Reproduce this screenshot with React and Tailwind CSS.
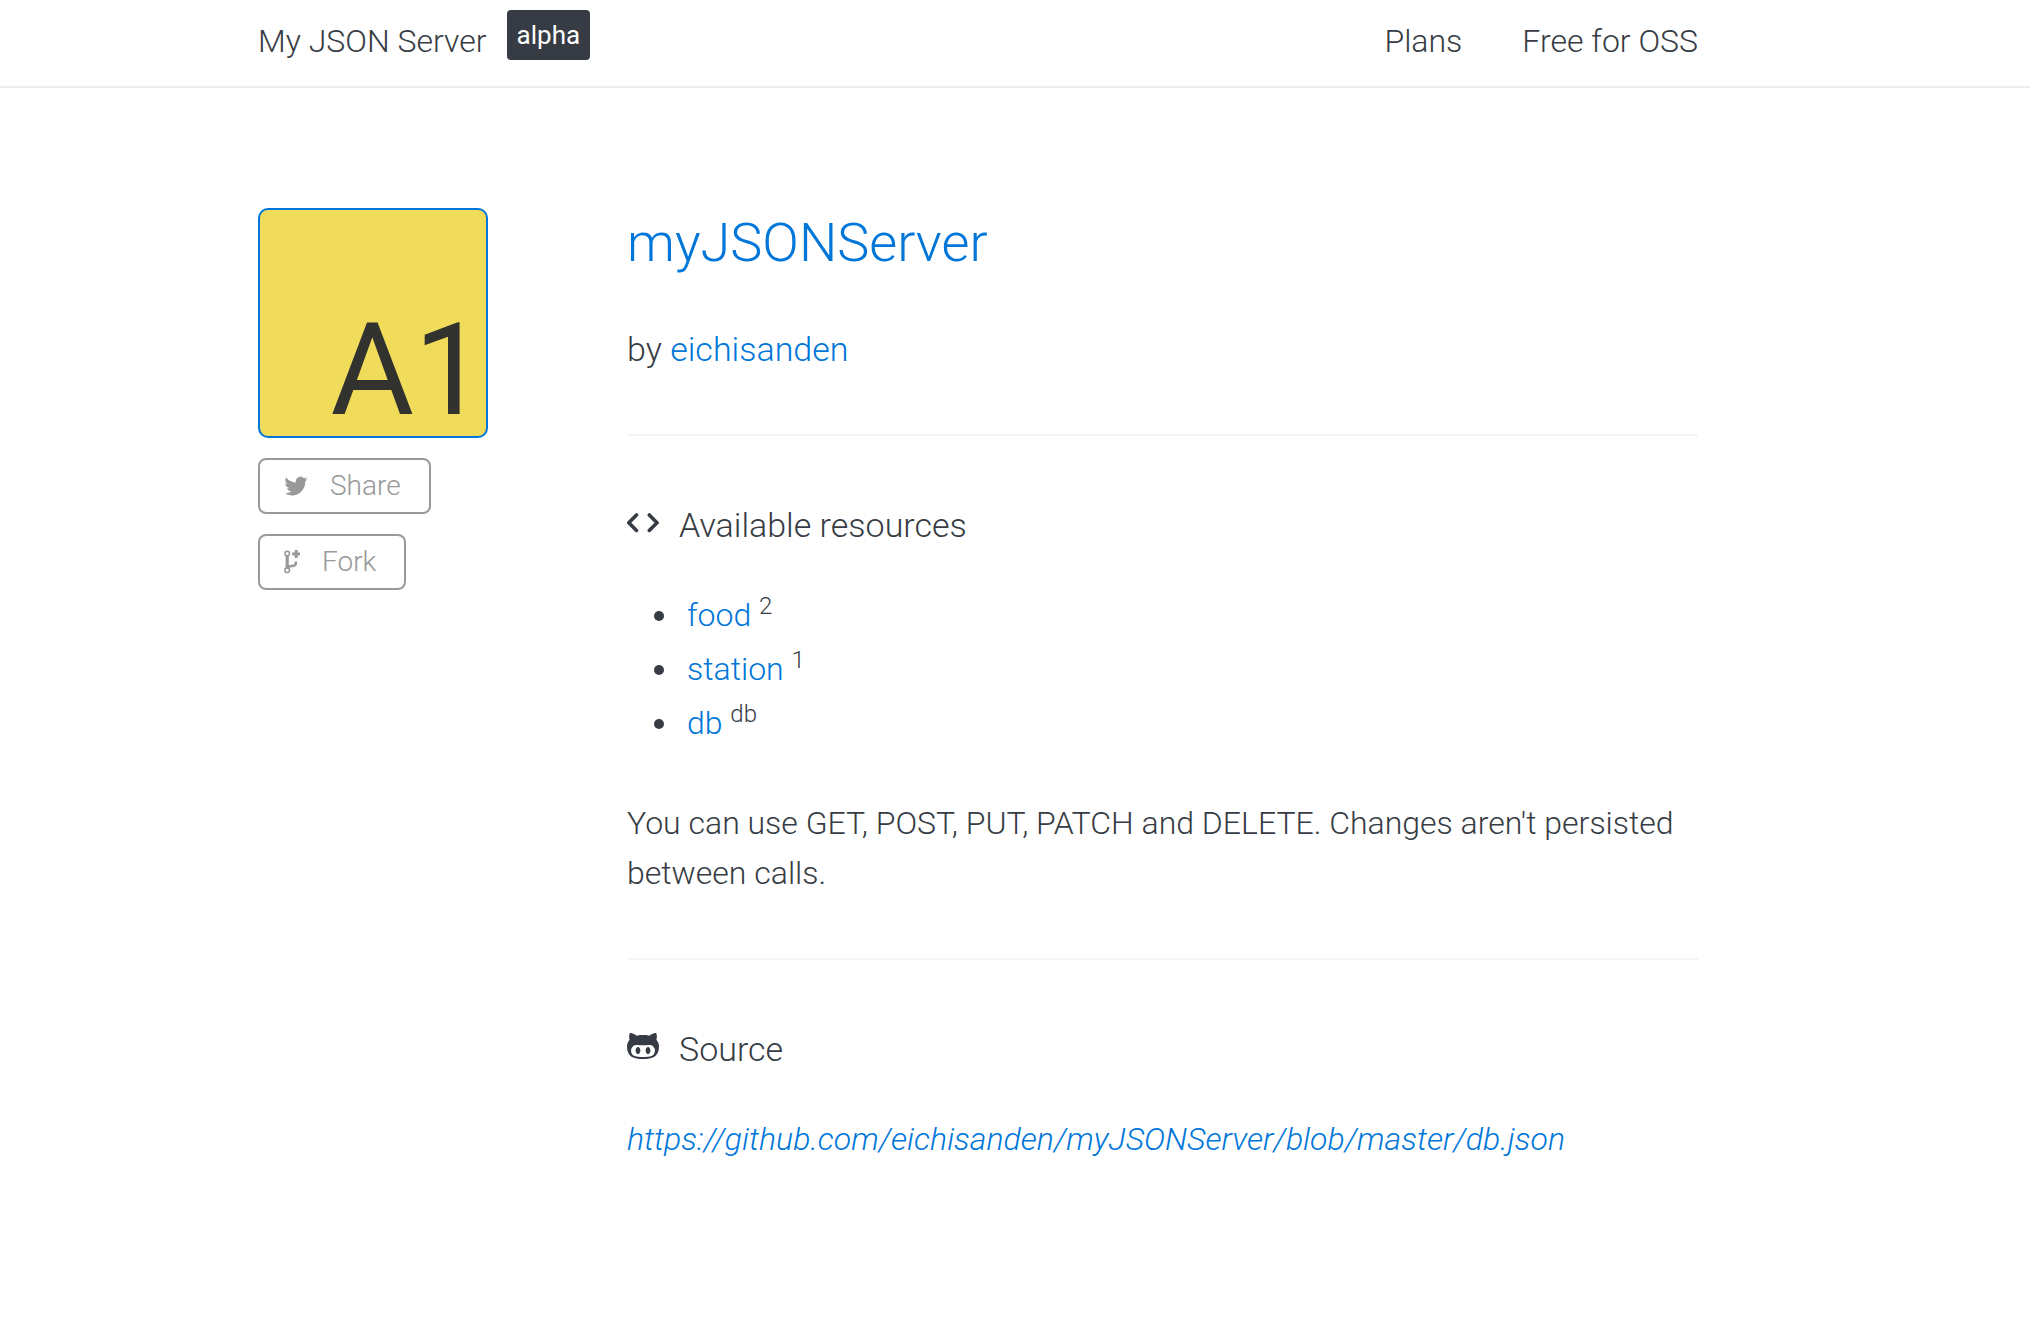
const resources = [
  { name: "food", count: "2" },
  { name: "station", count: "1" },
  { name: "db", count: "db" },
];

function TwitterIcon() {
  return (
    <svg viewBox="0 0 24 24" className="h-6 w-6" fill="currentColor" aria-hidden="true">
      <path d="M23.6 4.9c-.85.38-1.76.63-2.72.75a4.75 4.75 0 0 0 2.08-2.62c-.91.54-1.93.94-3 1.15a4.74 4.74 0 0 0-8.08 4.32A13.44 13.44 0 0 1 2.1 3.54a4.74 4.74 0 0 0 1.47 6.33c-.78-.03-1.51-.24-2.15-.6v.06a4.74 4.74 0 0 0 3.8 4.65c-.7.19-1.43.22-2.14.08a4.74 4.74 0 0 0 4.43 3.29A9.5 9.5 0 0 1 .5 19.31a13.4 13.4 0 0 0 7.27 2.13c8.73 0 13.5-7.23 13.5-13.5l-.02-.61a9.6 9.6 0 0 0 2.35-2.43z" />
    </svg>
  );
}

function ForkIcon() {
  return (
    <svg viewBox="0 0 16 24" className="h-6 w-4" fill="none" stroke="currentColor" aria-hidden="true">
      <circle cx="3.2" cy="3.6" r="2.3" strokeWidth="1.6" />
      <circle cx="3.2" cy="20.2" r="2.3" strokeWidth="1.6" />
      <path d="M3.200 6v12" strokeWidth="3.200" />
      <path d="M11.800 11.500v1.500q0 2.400-2.200 2.700l-3.400.5q-2.200.3-3 1.800" strokeWidth="2.600" />
      <path d="M12.200 0v8M8.200 4h8" strokeWidth="3" />
    </svg>
  );
}

function CodeIcon() {
  return (
    <svg viewBox="0 0 32 32" className="size-8" fill="none" stroke="currentColor" strokeWidth="3.600" strokeLinecap="round" aria-hidden="true">
      <path d="M9.500 6L1.800 13.700L9.500 21.400M22.300 6L30 13.700L22.300 21.400" />
    </svg>
  );
}

function OctofaceIcon() {
  return (
    <svg viewBox="0 2 16 16" className="size-8" fill="currentColor" aria-hidden="true">
      <path fillRule="evenodd" d="M14.7 5.34c.13-.32.55-1.59-.13-3.31 0 0-1.05-.33-3.44 1.3-1-.28-2.07-.32-3.13-.32s-2.13.04-3.13.32c-2.39-1.64-3.44-1.3-3.44-1.3-.68 1.72-.26 2.99-.13 3.31C.49 6.21 0 7.33 0 8.69 0 13.84 3.33 15 7.98 15S16 13.84 16 8.69c0-1.36-.49-2.48-1.3-3.35zM8 14.02c-3.3 0-5.98-.15-5.98-3.35 0-.76.38-1.48 1.02-2.07 1.07-.98 2.9-.46 4.96-.46 2.07 0 3.88-.52 4.96.46.65.59 1.02 1.3 1.02 2.07 0 3.19-2.68 3.35-5.98 3.35zM5.49 9.01c-.66 0-1.2.8-1.2 1.78s.54 1.79 1.2 1.79c.66 0 1.2-.8 1.2-1.79s-.54-1.78-1.2-1.78zm5.02 0c-.66 0-1.2.79-1.2 1.78s.54 1.79 1.2 1.79c.66 0 1.2-.8 1.2-1.79s-.53-1.78-1.2-1.78z" />
    </svg>
  );
}

function ActionLink({ href, icon, children }) {
  return (
    <a href={href} className="flex h-14 items-center gap-[22px] rounded-lg border-2 border-[#999999] pr-7 pl-6 text-[28px] text-[#999999]">
      {icon}
      {children}
    </a>
  );
}

function Divider() {
  return <hr className="mt-[60px] mb-16 border-t-2 border-[#f4f5f6]" />;
}

function Section({ icon, title, children }) {
  return (
    <section>
      <h3 className="mb-10 flex items-center gap-5 text-[34px] leading-[50px]">
        {icon}
        {title}
      </h3>
      {children}
    </section>
  );
}

export default function App() {
  return (
    <div className="min-h-screen bg-white font-['Roboto',sans-serif] text-[32px] leading-[50px] font-light text-[#373c44]">
      <header className="border-b-2 border-[#ececec] pr-[74px]">
        <div className="mx-auto flex max-w-[1440px] items-start justify-between pb-5">
          <div className="flex items-start gap-5">
            <a href="#home" className="pt-4">My JSON Server</a>
            <span className="mt-[10px] rounded-sm bg-[#373c44] px-[10px] text-[26px] font-normal text-white">alpha</span>
          </div>
          <nav className="flex gap-[60px] pt-4">
            <a href="#plans">Plans</a>
            <a href="#oss">Free for OSS</a>
          </nav>
        </div>
      </header>
      <main className="pt-[120px] pr-[74px]">
        <div className="mx-auto grid max-w-[1440px] grid-cols-[230px_1fr] gap-x-[139px]">
          <aside className="flex flex-col items-start gap-5">
            <a href="#profile" className="flex size-[230px] items-end justify-end rounded-[10px] border-2 border-[#0076d9] bg-[#f0db5b] pb-[2px] text-[128px] leading-[128px] font-normal text-[#32322f]">A1</a>
            <ActionLink href="#share" icon={<TwitterIcon />}>Share</ActionLink>
            <ActionLink href="#fork" icon={<ForkIcon />}>Fork</ActionLink>
          </aside>
          <div>
            <h1 className="text-[54px] leading-[70px]"><a href="#repo" className="text-[#0076d9]">myJSONServer</a></h1>
            <h3 className="mt-[46px] text-[34px] leading-[50px]">by <a href="#author" className="text-[#0076d9]">eichisanden</a></h3>
            <Divider />
            <Section icon={<CodeIcon />} title="Available resources">
              <ul className="flex list-disc flex-col gap-1 pl-[54px]">
                {resources.map((item) => (
                  <li key={item.name} className="pl-[6px]">
                    <a href={"#" + item.name} className="text-[#0076d9]">{item.name}</a> <sup className="text-2xl leading-none">{item.count}</sup>
                  </li>
                ))}
              </ul>
              <p className="mt-[50px]">You can use GET, POST, PUT, PATCH and DELETE. Changes aren't persisted between calls.</p>
            </Section>
            <Divider />
            <Section icon={<OctofaceIcon />} title="Source">
              <p><a href="#source" className="text-[#0076d9] italic">https://github.com/eichisanden/myJSONServer/blob/master/db.json</a></p>
            </Section>
          </div>
        </div>
      </main>
    </div>
  );
}
